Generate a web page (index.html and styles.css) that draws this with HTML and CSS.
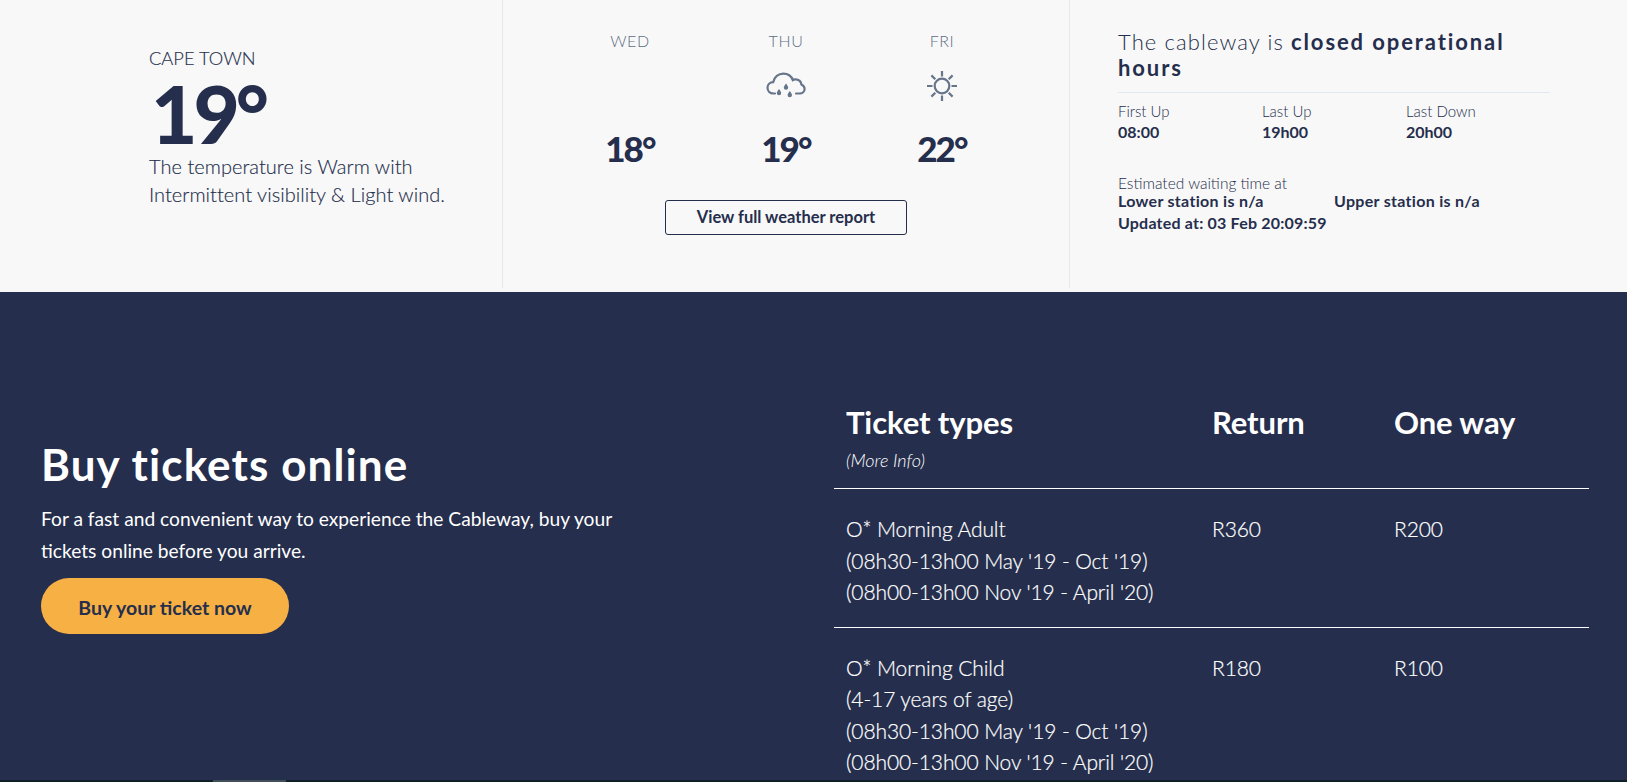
FILE: index.html
```html
<!DOCTYPE html>
<html lang="en">
<head>
<meta charset="utf-8">
<title>Table Mountain Cableway</title>
<link rel="stylesheet" href="styles.css">
</head>
<body>
<div class="viewport">
  <section class="status">
    <div class="col city">
      <div class="city-name">CAPE TOWN</div>
      <div class="city-temp">19°</div>
      <p class="city-desc">The temperature is Warm with<br>Intermittent visibility &amp; Light wind.</p>
    </div>
    <div class="col forecast">
      <div class="days">
        <div class="day">
          <div class="day-name">WED</div>
          <div class="day-icon"></div>
          <div class="day-temp">18°</div>
        </div>
        <div class="day">
          <div class="day-name">THU</div>
          <div class="day-icon">
            <svg class="icon" width="40" height="28" viewBox="0 0 40 28" fill="none" stroke="#66758a" stroke-width="2.2" stroke-linecap="round">
              <path d="M9 21.5H7.5C4 21.5 1.5 19 1.5 15.8C1.5 12.6 4 10.2 7.2 10.2C8.4 5 12.4 1.6 17.4 1.6C21.8 1.6 25.4 4.2 26.8 8C27.8 7.4 29 7.2 30.2 7.4C33 7.8 35 10 35.4 12.4C37.4 13.2 38.6 15 38.6 17C38.6 19.6 36.4 21.5 33.6 21.5H30"/>
              <path d="M20 11.5c1.4 2 2.2 3 2.2 4.1a2.2 2.2 0 0 1-4.4 0c0-1.1.8-2.1 2.2-4.1Z" fill="#66758a" stroke="none"/>
              <path d="M13 17c1.4 2 2.2 3 2.2 4.1a2.2 2.2 0 0 1-4.4 0c0-1.1.8-2.1 2.2-4.1Z" fill="#66758a" stroke="none"/>
              <path d="M23.800 19c1.4 2 2.2 3 2.2 4.100a2.200 2.200 0 0 1-4.400 0c0-1.100.8-2.100 2.200-4.100Z" fill="#66758a" stroke="none"/>
            </svg>
          </div>
          <div class="day-temp">19°</div>
        </div>
        <div class="day">
          <div class="day-name">FRI</div>
          <div class="day-icon">
            <svg class="icon" width="32" height="32" viewBox="0 0 32 32" fill="none" stroke="#66758a" stroke-width="2.2">
              <circle cx="16" cy="16" r="7.300"/>
              <path d="M16 1v5.500M16 25.500V31M1 16h5.500M25.500 16H31M5.400 5.400l3.900 3.900M22.700 22.700l3.900 3.900M5.400 26.600l3.900-3.900M22.700 9.300l3.900-3.900"/>
            </svg>
          </div>
          <div class="day-temp">22°</div>
        </div>
      </div>
      <a class="report-btn" href="#">View full weather report</a>
    </div>
    <div class="col cableway">
      <h2 class="cable-title">The cableway is <strong>closed operational hours</strong></h2>
      <div class="times">
        <div class="time"><span class="label">First Up</span><b>08:00</b></div>
        <div class="time"><span class="label">Last Up</span><b>19h00</b></div>
        <div class="time"><span class="label">Last Down</span><b>20h00</b></div>
      </div>
      <div class="wait-label">Estimated waiting time at</div>
      <div class="wait-row"><b>Lower station is n/a</b><b>Upper station is n/a</b></div>
      <div class="updated"><b>Updated at: 03 Feb 20:09:59</b></div>
    </div>
  </section>
  <section class="tickets">
    <div class="buy">
      <h1 class="buy-title">Buy tickets online</h1>
      <p class="buy-text">For a fast and convenient way to experience the Cableway, buy your tickets online before you arrive.</p>
      <a class="buy-btn" href="#">Buy your ticket now</a>
    </div>
    <table class="prices">
      <thead>
        <tr>
          <th class="c1">Ticket types<small>(More Info)</small></th>
          <th class="c2">Return</th>
          <th>One way</th>
        </tr>
      </thead>
      <tbody>
        <tr>
          <td>O* Morning Adult<br>(08h30-13h00 May '19 - Oct '19)<br>(08h00-13h00 Nov '19 - April '20)</td>
          <td>R360</td>
          <td>R200</td>
        </tr>
        <tr>
          <td>O* Morning Child<br>(4-17 years of age)<br>(08h30-13h00 May '19 - Oct '19)<br>(08h00-13h00 Nov '19 - April '20)</td>
          <td>R180</td>
          <td>R100</td>
        </tr>
      </tbody>
    </table>
  </section>
</div>
<div class="scrollbar"><div class="thumb"></div></div>
</body>
</html>
```
FILE: styles.css
```css
* { box-sizing: border-box; }
html, body { margin: 0; height: 782px; overflow: hidden; }
body {
  font-family: "Lato", "Noto Sans", sans-serif;
  color: #252e4c;
  background: #f8f8f8;
}
.viewport { height: 780px; overflow: hidden; }
a { text-decoration: none; }
p { margin: 0; }

.status { display: grid; grid-template-columns: 503px 567px 1fr; height: 292px; background: #f8f8f8; }
.col { height: 288px; }
.city { border-right: 1px solid #e3e8ef; padding: 46px 0 0 149px; }
.city-name { font-size: 18.300px; font-weight: 300; line-height: 24px; -webkit-text-stroke: 0.15px #252e4c; }
.city-temp { font-size: 80px; font-weight: 900; line-height: 76px; margin-top: 5px; margin-left: 2px; letter-spacing: -4px; }
.city-desc { font-size: 20px; font-weight: 300; line-height: 28px; margin-top: 1px; letter-spacing: 0.04px; -webkit-text-stroke: 0.15px #252e4c; }

.forecast { border-right: 1px solid #e3e8ef; display: flex; flex-direction: column; align-items: center; padding-top: 30px; }
.days { display: grid; grid-template-columns: repeat(3, 156px); text-align: center; }
.day-name { font-size: 16px; font-weight: 300; line-height: 22px; color: #5f6e85; letter-spacing: 0.6px; }
.day-icon { height: 71px; padding-bottom: 4px; margin-bottom: 3px; display: flex; align-items: center; justify-content: center; }
.icon { display: block; }
.day-temp { font-size: 35px; font-weight: 900; line-height: 44px; letter-spacing: -1.800px; }
.report-btn {
  display: block; width: 242px; height: 35px; margin-top: 30px;
  border: 1.5px solid #252e4c; border-radius: 3px;
  font-size: 16.500px; font-weight: 700; line-height: 32px; text-align: center; color: #252e4c;
}

.cableway { padding: 29px 78px 0 48px; }
.cable-title {
  margin: 0; padding-bottom: 11px; border-bottom: 1px solid #e3e8ef;
  font-size: 22px; font-weight: 300; line-height: 26px; letter-spacing: 1.1px;
}
.cable-title strong { font-weight: 700; letter-spacing: 1.9px; }
.times { display: grid; grid-template-columns: repeat(3, 144px); margin-top: 8px; }
.time { display: flex; flex-direction: column; font-size: 15px; line-height: 21px; }
.time b { font-size: 16px; line-height: 20px; }
.label { font-weight: 300; }
.wait-label { font-size: 15.500px; font-weight: 300; line-height: 18px; margin-top: 32px; }
.wait-row { display: grid; grid-template-columns: 216px auto; font-size: 16px; line-height: 18px; letter-spacing: 0.3px; }
.updated { font-size: 16px; line-height: 18px; margin-top: 4px; letter-spacing: 0.2px; }

.tickets { display: flex; background: #252e4c; color: #fff; height: 488px; padding-left: 41px; align-items: flex-start; }
.buy { width: 793px; padding-top: 147px; }
.buy-title { margin: 0; font-size: 44px; font-weight: 700; line-height: 50px; letter-spacing: 1.1px; }
.buy-text { width: 600px; font-size: 19.200px; line-height: 32px; margin-top: 14px; }
.buy-btn {
  display: block; width: 248px; height: 56px; margin-top: 11px; border-radius: 28px;
  background: #f7b044; color: #252e4c;
  font-size: 19.500px; font-weight: 700; line-height: 60px; text-align: center;
}

.prices { width: 755px; border-collapse: collapse; margin-top: 100px; table-layout: fixed; }
.prices th, .prices td { padding: 0 0 0 12px; text-align: left; vertical-align: top; }
.prices th { font-size: 31px; font-weight: 700; line-height: 36px; padding-top: 12px; padding-bottom: 16px; letter-spacing: -0.1px; }
.prices th.c1 { width: 366px; }
.prices th.c2 { width: 182px; }
.prices small { display: block; font-size: 18px; font-weight: 300; font-style: italic; line-height: 24px; margin-top: 8px; letter-spacing: 0; }
.prices tr { border-bottom: 1px solid #fff; }
.prices td { font-size: 21px; font-weight: 300; line-height: 31.500px; padding-top: 24px; padding-bottom: 19px; letter-spacing: -0.1px; -webkit-text-stroke: 0.2px #fff; }

.scrollbar { height: 2px; background: #0f1f26; }
.thumb { width: 73px; height: 2px; margin-left: 213px; background: #414d57; }
```
